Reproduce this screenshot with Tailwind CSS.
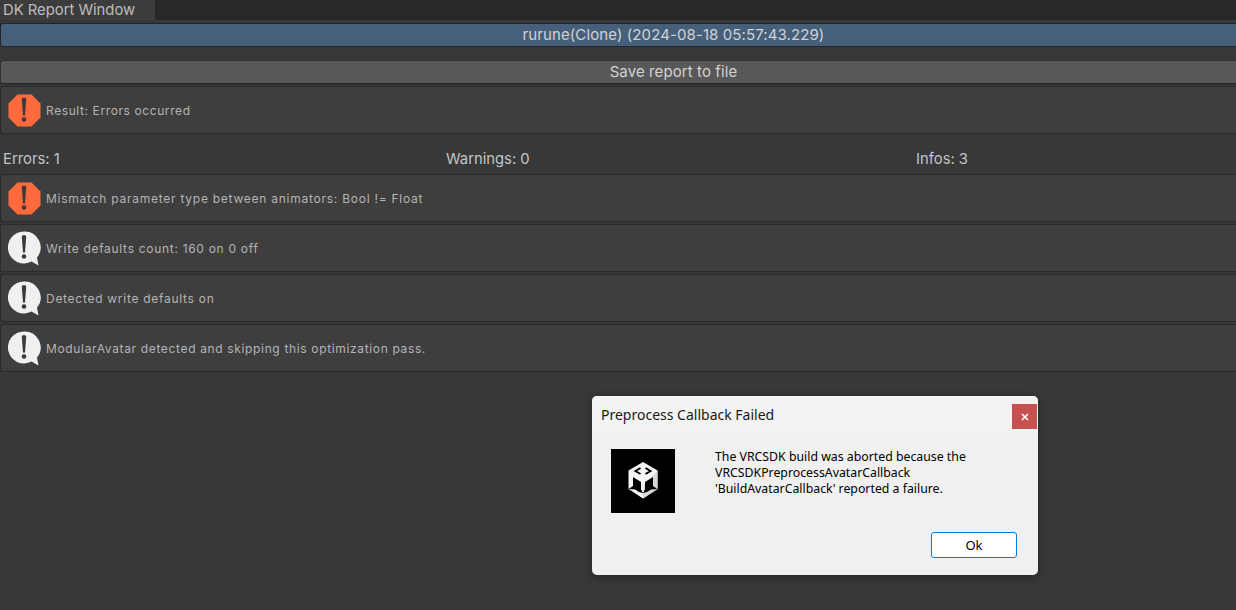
<!DOCTYPE html>
<html lang="en">
<head>
    <meta charset="UTF-8">
    <title>DK Report Window</title>
    <script src="https://cdn.jsdelivr.net/npm/@tailwindcss/browser@4"></script>
</head>
<body class="relative w-[1236px] h-[610px] overflow-hidden bg-[#383838] font-['Inter',sans-serif] text-[#c4c4c4]">

    <!-- tab bar -->
    <div class="h-[20px] bg-[#282828] flex">
        <div class="w-[155px] h-[20px] bg-[#3c3c3c] pl-[3px] text-[14.8px] leading-[21px] text-[#bdbdbd]">DK Report Window</div>
    </div>

    <!-- the real window is wider than the viewport: bars are open on the right, labels stay off-centre -->
    <div class="h-[3px]"></div>
    <div class="h-[24px] pl-[110px] bg-[#46607c] border border-r-0 border-[#242424] rounded-l-[3px] text-center text-[15px] tracking-[0.1px] leading-[21px] text-[#d2d2d2]">rurune(Clone) (2024-08-18 05:57:43.229)</div>

    <div class="h-[13px]"></div>
    <div class="h-[24px] pl-[110px] bg-[#585858] border border-r-0 border-[#303030] border-b-[#242424] rounded-l-[3px] text-center text-[15px] tracking-[0.1px] leading-[22px] text-[#d2d2d2]">Save report to file</div>

    <div class="h-[2px]"></div>
    <div class="h-[48px] bg-[#3e3e3e] border border-r-0 border-[#2a2a2a] rounded-l-[3px] flex items-center pl-[7px] gap-[5px]">
        <svg class="w-[33px] h-[33px] shrink-0" viewBox="0 0 33 33"><polygon points="9.5,0.5 23.5,0.5 32.5,9.5 32.5,23.5 23.5,32.5 9.5,32.5 0.5,23.5 0.5,9.5" fill="#ff6a3d"/><path d="M13.8 5.2q0-1.7 2.2-1.7t2.2 1.7L17 21.5h-2z" fill="#3a3a3a"/><circle cx="16" cy="25.5" r="2.3" fill="#3a3a3a"/></svg>
        <span class="mt-[2px] text-[12px] tracking-[0.6px] text-[#b4b4b4]">Result: Errors occurred</span>
    </div>

    <div class="h-[16px]"></div>
    <div class="h-[18px] flex text-[14.8px] leading-[18px] text-[#c4c4c4]">
        <span class="w-[446px] pl-[3px]">Errors: 1</span>
        <span class="w-[470px]">Warnings: 0</span>
        <span>Infos: 3</span>
    </div>

    <div class="h-[6px]"></div>
    <div class="flex flex-col gap-[2px]">
        <div class="h-[48px] bg-[#3e3e3e] border border-r-0 border-[#2a2a2a] rounded-l-[3px] flex items-center pl-[7px] gap-[5px]">
            <svg class="w-[33px] h-[33px] shrink-0" viewBox="0 0 33 33"><polygon points="9.5,0.5 23.5,0.5 32.5,9.5 32.5,23.5 23.5,32.5 9.5,32.5 0.5,23.5 0.5,9.5" fill="#ff6a3d"/><path d="M13.8 5.2q0-1.7 2.2-1.7t2.2 1.7L17 21.5h-2z" fill="#3a3a3a"/><circle cx="16" cy="25.5" r="2.3" fill="#3a3a3a"/></svg>
            <span class="mt-[2px] text-[12px] tracking-[0.75px] text-[#b4b4b4]">Mismatch parameter type between animators: Bool != Float</span>
        </div>
        <div class="h-[48px] bg-[#3e3e3e] border border-r-0 border-[#2a2a2a] rounded-l-[3px] flex items-center pl-[7px] gap-[5px]">
            <svg class="w-[33px] h-[35px] shrink-0" viewBox="0 0 33 35"><path d="M16 0.5a16 16 0 1 0 7.5 30.1l7 3.9-1.5-7.9A16 16 0 0 0 16 0.5z" fill="#f0f0f0"/><path d="M13.8 5.7q0-1.7 2.2-1.7t2.2 1.7L17 21.5h-2z" fill="#3a3a3a"/><circle cx="16" cy="25.5" r="2.3" fill="#3a3a3a"/></svg>
            <span class="mt-[2px] text-[12px] tracking-[0.7px] text-[#b4b4b4]">Write defaults count: 160 on 0 off</span>
        </div>
        <div class="h-[48px] bg-[#3e3e3e] border border-r-0 border-[#2a2a2a] rounded-l-[3px] flex items-center pl-[7px] gap-[5px]">
            <svg class="w-[33px] h-[35px] shrink-0" viewBox="0 0 33 35"><path d="M16 0.5a16 16 0 1 0 7.5 30.1l7 3.9-1.5-7.9A16 16 0 0 0 16 0.5z" fill="#f0f0f0"/><path d="M13.8 5.7q0-1.7 2.2-1.7t2.2 1.7L17 21.5h-2z" fill="#3a3a3a"/><circle cx="16" cy="25.5" r="2.3" fill="#3a3a3a"/></svg>
            <span class="mt-[2px] text-[12px] tracking-[0.72px] text-[#b4b4b4]">Detected write defaults on</span>
        </div>
        <div class="h-[48px] bg-[#3e3e3e] border border-r-0 border-[#2a2a2a] rounded-l-[3px] flex items-center pl-[7px] gap-[5px]">
            <svg class="w-[33px] h-[35px] shrink-0" viewBox="0 0 33 35"><path d="M16 0.5a16 16 0 1 0 7.5 30.1l7 3.9-1.5-7.9A16 16 0 0 0 16 0.5z" fill="#f0f0f0"/><path d="M13.8 5.7q0-1.7 2.2-1.7t2.2 1.7L17 21.5h-2z" fill="#3a3a3a"/><circle cx="16" cy="25.5" r="2.3" fill="#3a3a3a"/></svg>
            <span class="mt-[2px] text-[12px] tracking-[0.65px] text-[#b4b4b4]">ModularAvatar detected and skipping this optimization pass.</span>
        </div>
    </div>

    <!-- native dialog -->
    <div class="absolute left-[592px] top-[396px] w-[446px] h-[179px] bg-[#f0f0f0] rounded-[5px] overflow-hidden shadow-[0_2px_10px_rgba(0,0,0,0.4)] font-['Noto_Sans',sans-serif] text-black">
        <div class="h-[37px] bg-[#f3f3f3] flex items-start justify-between pl-[9px]">
            <span class="text-[14px] leading-[38px] text-[#1a1a1a]">Preprocess Callback Failed</span>
            <div class="w-[25px] h-[25px] mt-[8px] mr-px bg-[#c75050] flex items-center justify-center">
                <svg class="w-[8px] h-[8px]" viewBox="0 0 8 8"><path d="M1 1l6 6M7 1l-6 6" stroke="#fff" stroke-width="1.6"/></svg>
            </div>
        </div>
        <div class="flex pl-[19px] pt-[16px]">
            <div class="w-[64px] h-[64px] bg-black flex items-center justify-center shrink-0">
                <svg class="w-[46px] h-[46px]" viewBox="0 0 46 46">
                    <polygon points="23,4 37.5,12.5 37.5,31 23,40.5 8.5,31 8.5,12.5" fill="#f6f6f6"/>
                    <polygon points="37.5,12.5 37.5,31 23,40.5 23,29" fill="#d8d8d8"/>
                    <path d="M20.5 10L15.5 13L20.5 16M25.5 10L30.5 13L25.5 16" fill="none" stroke="#000" stroke-width="2"/>
                    <path d="M8.5 31L13 28L13 19L21 24L21 32L23 33L25 32L25 24L33 19L33 28L37.5 31L31 31.5L27 34L23 35L19 34L15 31.5Z" fill="#000"/>
                    <path d="M15 21.5L20 24.5L20 31L15 28Z M31 21.5L26 24.5L26 31L31 28Z" fill="#000"/>
                    <path d="M22 25H24V34H22Z" fill="#f0f0f0"/>
                </svg>
            </div>
            <p class="ml-[40px] text-[12.3px] leading-[16px] w-[295px]">The VRCSDK build was aborted because the<br>VRCSDKPreprocessAvatarCallback<br>'BuildAvatarCallback' reported a failure.</p>
        </div>
        <div class="absolute left-[339px] top-[136px] w-[86px] h-[26px] bg-white border border-[#0078d4] rounded-[3px] text-center text-[13px] leading-[25px]">Ok</div>
    </div>

</body>
</html>
